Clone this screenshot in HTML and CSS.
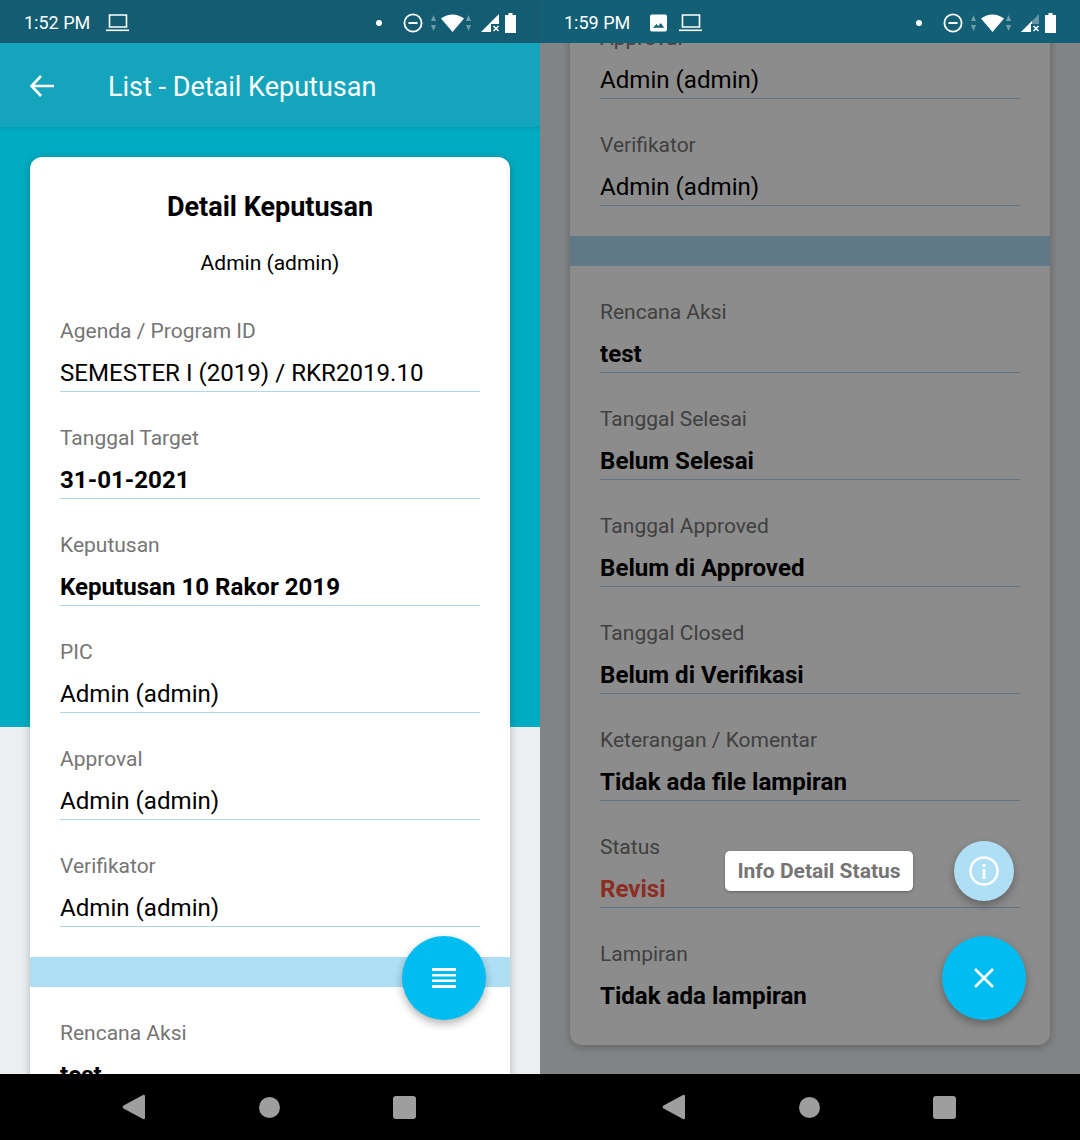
FILE: index.html
```html
<!DOCTYPE html>
<html lang="en">
    <head>
        <meta charset="UTF-8" />
        <title>Detail Keputusan</title>
        <link rel="stylesheet" href="styles.css">
    </head>
    <body>
        <div class="screens">
            <!-- left phone -->
            <section class="phone">
                <header class="status status-left">
                    <span class="time">1:52 PM</span>
                    <svg class="ic-laptop" width="24" height="18" viewBox="0 0 24 18"><path d="M3.5 1h17v12h-17z" fill="none" stroke="#fff" stroke-width="1.6"/><path d="M0 15.5h23v1.6H0z" fill="#fff"/></svg>
                    <div class="status-right">
                        <span class="dot"></span>
                        <svg width="20" height="20" viewBox="0 0 20 20"><circle cx="10" cy="10" r="8.6" fill="none" stroke="#fff" stroke-width="1.8"/><path d="M5.5 9h9v2h-9z" fill="#fff"/></svg>
                        <svg class="ic-wifi" width="42" height="20" viewBox="0 0 42 20"><path d="M3.5 2l2.5 6h-5zM3.500 18l-2.500-6h5zM38.500 2l2.500 6h-5zM38.500 18l-2.500-6h5z" fill="#fff" opacity=".4"/><path d="M11 5.500q11.500-8 23 0L22.500 19z" fill="#fff"/></svg>
                        <svg class="ic-signal" width="22" height="20" viewBox="0 0 22 20"><path d="M0 19L18 1v18z" fill="#fff"/><path d="M10 11h11v9H10z" fill="#135c72"/><path d="M12.500 13l5 5m0-5l-5 5" stroke="#fff" stroke-width="1.500"/></svg>
                        <svg width="11" height="20" viewBox="0 0 11 20"><path d="M3.500 0h4v2H11v18H0V2h3.500z" fill="#fff"/></svg>
                    </div>
                </header>
                <div class="appbar">
                    <svg width="26" height="24" viewBox="0 0 26 24"><path d="M25 12H3M12 2L2.500 12 12 22" fill="none" stroke="#fff" stroke-width="2.600"/></svg>
                    <h2 class="appbar-title">List - Detail Keputusan</h2>
                </div>
                <div class="content content-left">
                    <div class="hero"></div>
                    <div class="card">
                        <h1 class="card-title">Detail Keputusan</h1>
                        <p class="card-sub">Admin (admin)</p>
                        <div class="field"><label>Agenda / Program ID</label><div class="value">SEMESTER I (2019) / RKR2019.10</div></div>
                        <div class="field"><label>Tanggal Target</label><div class="value bold">31-01-2021</div></div>
                        <div class="field"><label>Keputusan</label><div class="value bold">Keputusan 10 Rakor 2019</div></div>
                        <div class="field"><label>PIC</label><div class="value">Admin (admin)</div></div>
                        <div class="field"><label>Approval</label><div class="value">Admin (admin)</div></div>
                        <div class="field"><label>Verifikator</label><div class="value">Admin (admin)</div></div>
                        <div class="band"></div>
                        <div class="field"><label>Rencana Aksi</label><div class="value bold">test</div></div>
                    </div>
                    <button class="fab fab-main fab-left">
                        <svg width="26" height="22" viewBox="0 0 26 22"><path d="M1 1h24v3H1zM1 7h24v2.500H1zM1 12.500h24V15H1zM1 18h24v3H1z" fill="#fff"/></svg>
                    </button>
                </div>
                <nav class="navbar">
                    <svg width="24" height="26" viewBox="0 0 24 26"><path d="M23 2v22a1.500 1.500 0 0 1-2 1L1.500 14.500a2 2 0 0 1 0-3L21 1a1.500 1.500 0 0 1 2 1z" fill="#9e9e9e"/></svg>
                    <span class="nav-circle"></span>
                    <span class="nav-square"></span>
                </nav>
            </section>

            <!-- right phone, menu open -->
            <section class="phone">
                <header class="status status-dim">
                    <span class="time">1:59 PM</span>
                    <svg class="ic-image" width="17" height="18" viewBox="0 0 18 18"><path d="M2 0h14a2 2 0 0 1 2 2v14a2 2 0 0 1-2 2H2a2 2 0 0 1-2-2V2a2 2 0 0 1 2-2zM3 14h12l-3.500-5-2.800 3.400L7 10z" fill="#fff" fill-rule="evenodd"/></svg>
                    <svg class="ic-laptop" width="24" height="18" viewBox="0 0 24 18"><path d="M3.500 1h17v12h-17z" fill="none" stroke="#fff" stroke-width="1.600"/><path d="M0 15.500h23v1.600H0z" fill="#fff"/></svg>
                    <div class="status-right">
                        <span class="dot"></span>
                        <svg width="20" height="20" viewBox="0 0 20 20"><circle cx="10" cy="10" r="8.600" fill="none" stroke="#fff" stroke-width="1.800"/><path d="M5.500 9h9v2h-9z" fill="#fff"/></svg>
                        <svg class="ic-wifi" width="42" height="20" viewBox="0 0 42 20"><path d="M3.500 2l2.500 6h-5zM3.500 18l-2.500-6h5zM38.500 2l2.500 6h-5zM38.500 18l-2.500-6h5z" fill="#fff" opacity=".4"/><path d="M11 5.500q11.500-8 23 0L22.500 19z" fill="#fff"/></svg>
                        <svg class="ic-signal" width="22" height="20" viewBox="0 0 22 20"><path d="M0 19L18 1v18z" fill="#fff" opacity=".35"/><path d="M0 19l11-11v11z" fill="#fff"/><path d="M10 11h11v9H10z" fill="#135f75"/><path d="M12.500 13l5 5m0-5l-5 5" stroke="#fff" stroke-width="1.500"/></svg>
                        <svg width="11" height="20" viewBox="0 0 11 20"><path d="M3.500 0h4v2H11v18H0V2h3.500z" fill="#fff"/></svg>
                    </div>
                </header>
                <div class="content content-right">
                    <div class="card card-scrolled">
                        <div class="field"><label>Approval</label><div class="value">Admin (admin)</div></div>
                        <div class="field"><label>Verifikator</label><div class="value">Admin (admin)</div></div>
                        <div class="band"></div>
                        <div class="field"><label>Rencana Aksi</label><div class="value bold">test</div></div>
                        <div class="field"><label>Tanggal Selesai</label><div class="value bold">Belum Selesai</div></div>
                        <div class="field"><label>Tanggal Approved</label><div class="value bold">Belum di Approved</div></div>
                        <div class="field"><label>Tanggal Closed</label><div class="value bold">Belum di Verifikasi</div></div>
                        <div class="field"><label>Keterangan / Komentar</label><div class="value bold">Tidak ada file lampiran</div></div>
                        <div class="field"><label>Status</label><div class="value bold red">Revisi</div></div>
                        <div class="field"><label>Lampiran</label><div class="value bold no-line">Tidak ada lampiran</div></div>
                    </div>
                    <div class="dim"></div>
                    <span class="fab-label">Info Detail Status</span>
                    <button class="fab fab-small">
                        <svg width="32" height="32" viewBox="0 0 32 32"><circle cx="16" cy="16" r="13.500" fill="none" stroke="#fff" stroke-width="2.500"/><path d="M14.600 14h2.800v10h-2.800zM14.600 9h2.800v3h-2.800z" fill="#fff"/></svg>
                    </button>
                    <button class="fab fab-main">
                        <svg width="22" height="22" viewBox="0 0 22 22"><path d="M2 2l18 18M20 2L2 20" stroke="#fff" stroke-width="2.600"/></svg>
                    </button>
                </div>
                <nav class="navbar">
                    <svg width="24" height="26" viewBox="0 0 24 26"><path d="M23 2v22a1.500 1.500 0 0 1-2 1L1.500 14.500a2 2 0 0 1 0-3L21 1a1.500 1.500 0 0 1 2 1z" fill="#9e9e9e"/></svg>
                    <span class="nav-circle"></span>
                    <span class="nav-square"></span>
                </nav>
            </section>
        </div>
    </body>
</html>
```

FILE: styles.css
```css
* {
    box-sizing: border-box;
}
body {
    margin: 0;
    font-family: Roboto, "Liberation Sans", sans-serif;
    background: #000;
}
.screens {
    display: flex;
    width: 1080px;
    height: 1140px;
}
.phone {
    width: 540px;
    height: 1140px;
    display: flex;
    flex-direction: column;
    overflow: hidden;
}

/* status bar */
.status {
    height: 43px;
    display: flex;
    align-items: center;
    padding: 2px 24px 0;
    color: #fff;
    flex: none;
}
.status-left {
    background: #135c72;
}
.status-dim {
    background: #135f75;
}
.time {
    font-size: 18px;
    margin-right: 16px;
}
.ic-image {
    margin: 0 12px 0 4px;
}
.status-right {
    margin-left: auto;
    display: flex;
    align-items: center;
}
.dot {
    width: 6px;
    height: 6px;
    border-radius: 50%;
    background: #fff;
    margin-right: 21px;
}
.ic-wifi {
    margin: 0 9px 0 7px;
}
.ic-signal {
    margin-right: 2px;
}

/* app bar */
.appbar {
    height: 84px;
    flex: none;
    display: flex;
    align-items: center;
    padding: 2px 0 0 29px;
    background: #14a5bd;
    box-shadow: 0 1px 3px rgba(0, 0, 0, 0.12);
    position: relative;
    z-index: 2;
}
.appbar-title {
    margin: 1px 0 0 53px;
    font-size: 27px;
    font-weight: 400;
    color: #fff;
}

/* content */
.content {
    position: relative;
    flex: 1;
    overflow: hidden;
    background: #eceff1;
}
.content-left {
    padding: 30px 30px 0;
}
.hero {
    position: absolute;
    top: 0;
    left: 0;
    right: 0;
    height: 600px;
    background: #00acc1;
}
.card {
    position: relative;
    background: #fff;
    border-radius: 12px;
    padding-top: 20px;
    box-shadow: 0 2px 8px rgba(0, 0, 0, 0.25);
}
.card-title {
    margin: 0;
    text-align: center;
    font-size: 27px;
    line-height: 60px;
    font-weight: 700;
    color: #000;
}
.card-sub {
    margin: 0 0 16px;
    text-align: center;
    font-size: 21px;
    line-height: 52px;
    color: #000;
}
.field {
    height: 107px;
    padding: 0 30px;
}
.field label {
    display: block;
    height: 51px;
    padding-top: 12px;
    font-size: 21px;
    line-height: 28px;
    color: #757575;
}
.value {
    height: 36px;
    font-size: 24.1px;
    line-height: 34px;
    color: #000;
    border-bottom: 1px solid #aed9ea;
}
.bold {
    font-weight: 700;
}
.no-line {
    border-bottom: none;
}
.red {
    color: #ff5040;
}
.band {
    height: 30px;
    margin: 10px 0 20px;
    background: #aedff4;
}

/* right phone */
.card-scrolled {
    margin: -31px 30px 0;
    padding-top: 0;
    padding-bottom: 10px;
}
.dim {
    position: absolute;
    top: 0;
    left: 0;
    right: 0;
    bottom: 0;
    background: rgba(0, 0, 0, 0.45);
}

/* floating buttons */
.fab {
    position: absolute;
    display: flex;
    align-items: center;
    justify-content: center;
    padding: 0;
    border: none;
    border-radius: 50%;
    box-shadow: 0 4px 8px rgba(0, 0, 0, 0.3);
}
.fab-main {
    left: 402px;
    top: 893px;
    width: 84px;
    height: 84px;
    background: #00bcf0;
}
.fab-left {
    top: 809px;
}
.fab-small {
    left: 414px;
    top: 798px;
    width: 60px;
    height: 60px;
    background: #aedff4;
}
.fab-label {
    position: absolute;
    left: 185px;
    top: 808px;
    width: 188px;
    height: 40px;
    border-radius: 5px;
    background: #fff;
    color: #757575;
    font-size: 21px;
    font-weight: 700;
    line-height: 40px;
    text-align: center;
    box-shadow: 0 1px 3px rgba(0, 0, 0, 0.3);
}

/* android nav */
.navbar {
    height: 66px;
    flex: none;
    background: #000;
    display: flex;
    align-items: center;
    padding: 0 124px 0 122px;
    justify-content: space-between;
}
.nav-circle {
    width: 21px;
    height: 21px;
    border-radius: 50%;
    background: #9e9e9e;
}
.nav-square {
    width: 23px;
    height: 23px;
    border-radius: 3px;
    background: #9e9e9e;
}
```
